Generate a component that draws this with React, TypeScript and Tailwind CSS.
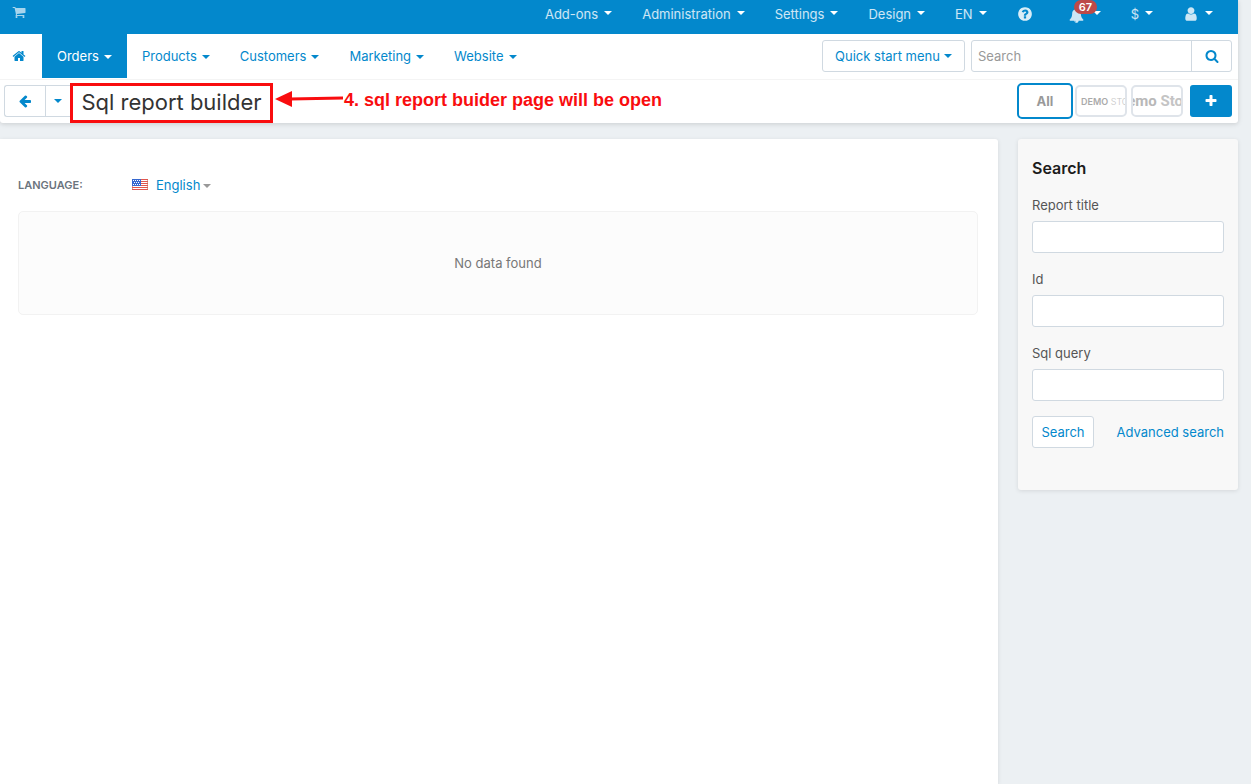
import type { ReactNode } from 'react';

const icons = {
  home: 'M1472 992v480q0 26-19 45t-45 19h-384v-384h-256v384h-384q-26 0-45-19t-19-45v-480q0-1 .5-3t.5-3l575-474 575 474q1 2 1 6zm223-69l-62 74q-8 9-21 11h-3q-13 0-21-7l-692-577-692 577q-12 8-24 7-13-2-21-11l-62-74q-8-10-7-23.5t11-21.5l719-599q32-26 76-26t76 26l244 204v-195q0-14 9-23t23-9h192q14 0 23 9t9 23v408l219 182q10 8 11 21.5t-7 23.5z',
  search: 'M1216 832q0-185-131.5-316.5t-316.5-131.5-316.5 131.5-131.5 316.5 131.5 316.5 316.5 131.5 316.5-131.5 131.5-316.5zm512 832q0 52-38 90t-90 38q-54 0-90-38l-343-342q-179 124-399 124-143 0-273.5-55.5t-225-150-150-225-55.5-273.5 55.5-273.5 150-225 225-150 273.5-55.5 273.5 55.5 225 150 150 225 55.5 273.5q0 220-124 399l343 343q37 37 37 90z',
  cart: 'M704 1536q0 52-38 90t-90 38-90-38-38-90 38-90 90-38 90 38 38 90zm896 0q0 52-38 90t-90 38-90-38-38-90 38-90 90-38 90 38 38 90zm128-1088v512q0 24-16.5 42.5t-40.5 21.5l-1044 122q13 60 13 70 0 16-24 64h920q26 0 45 19t19 45-19 45-45 19h-1024q-26 0-45-19t-19-45q0-11 8-31.5t16-36 21.5-40 15.5-29.5l-177-823h-204q-26 0-45-19t-19-45 19-45 45-19h256q16 0 28.5 6.5t19.5 15.5 13 24.5 8 26 5.5 29.5 4.5 26h1201q26 0 45 19t19 45z',
  help: 'M1024 1376v-192q0-14-9-23t-23-9h-192q-14 0-23 9t-9 23v192q0 14 9 23t23 9h192q14 0 23-9t9-23zm256-672q0-88-55.5-163t-138.5-116-170-41q-243 0-371 213-15 24 8 42l132 100q7 6 19 6 16 0 25-12 53-68 86-92 34-24 86-24 48 0 85.5 26t37.5 59q0 38-20 61t-68 45q-63 28-115.5 86.5t-52.5 125.5v36q0 14 9 23t23 9h192q14 0 23-9t9-23q0-19 21.5-49.5t54.5-49.5q32-18 49-28.5t46-35 44.5-48 28-60.5 12.5-81zm384 192q0 209-103 385.5t-279.5 279.5-385.5 103-385.5-103-279.5-279.5-103-385.5 103-385.5 279.5-279.5 385.5-103 385.5 103 279.5 279.5 103 385.5z',
  user: 'M1536 1399q0 109-62.5 187t-150.5 78h-854q-88 0-150.5-78t-62.5-187q0-85 8.5-160.5t31.5-152 58.5-131 94-89 134.5-34.5q131 128 313 128t313-128q76 0 134.5 34.5t94 89 58.5 131 31.5 152 8.5 160.5zm-256-887q0 159-112.5 271.5t-271.5 112.5-271.5-112.5-112.5-271.5 112.5-271.5 271.5-112.5 271.5 112.5 112.5 271.5z',
  plus: 'M1600 736v192q0 40-28 68t-68 28h-416v416q0 40-28 68t-68 28h-192q-40 0-68-28t-28-68v-416h-416q-40 0-68-28t-28-68v-192q0-40 28-68t68-28h416v-416q0-40 28-68t68-28h192q40 0 68 28t28 68v416h416q40 0 68 28t28 68z',
  back: 'M1664 896v128q0 53-32.5 90.5t-84.5 37.5h-704l293 294q38 36 38 90t-38 90l-75 76q-37 37-90 37-52 0-91-37l-651-652q-37-37-37-90 0-52 37-91l651-650q38-38 91-38 52 0 90 38l75 74q38 38 38 91t-38 91l-293 293h704q52 0 84.5 37.5t32.5 90.5z',
  bell: 'M912 1696q0-16-16-16-59 0-101.5-42.5t-42.5-101.5q0-16-16-16t-16 16q0 73 51.5 124.5t124.5 51.5q16 0 16-16zm816-288q0 52-38 90t-90 38h-448q0 106-75 181t-181 75-181-75-75-181h-448q-52 0-90-38t-38-90q50-42 91-88t85-119.5 74.5-158.5 50-206 19.5-260q0-152 117-282.5t307-158.5q-8-19-8-39 0-40 28-68t68-28 68 28 28 68q0 20-8 39 190 28 307 158.5t117 282.5q0 139 19.5 260t50 206 74.5 158.5 85 119.5 91 88z',
};

function Icon({ name, className = 'size-4' }: { name: keyof typeof icons; className?: string }) {
  return (
    <svg viewBox="0 0 1792 1792" fill="currentColor" aria-hidden="true" className={`shrink-0 ${className}`}>
      <path d={icons[name]} />
    </svg>
  );
}

function Caret({ className = '' }: { className?: string }) {
  return <span className={`inline-block shrink-0 border-x-4 border-t-4 border-x-transparent ${className}`} />;
}

function TopItem({ label, children }: { label?: string; children: ReactNode }) {
  return (
    <button type="button" aria-label={label} className="flex items-center gap-1.5 px-[15px] h-[30px] text-white/80">
      {children}
      <Caret className="border-t-white mb-1" />
    </button>
  );
}

function TopBar() {
  return (
    <div className="flex justify-between h-[34px] bg-[#0388cc] pl-3 pr-2.5">
      <a href="#" aria-label="Storefront" className="text-white/65 pt-[5px]">
        <Icon name="cart" className="size-3.5" />
      </a>
      <div className="flex items-start">
        <TopItem>Add-ons</TopItem>
        <TopItem>Administration</TopItem>
        <TopItem>Settings</TopItem>
        <TopItem>Design</TopItem>
        <TopItem>EN</TopItem>
        <button type="button" aria-label="Help" className="flex items-center h-7 px-[15px] text-white/85">
          <Icon name="help" />
        </button>
        <div className="relative ml-1.5">
          <TopItem label="Notifications">
            <Icon name="bell" className="size-[15px] mr-[3px]" />
          </TopItem>
          <span className="absolute left-5 top-0 h-3.5 px-[5px] rounded-full bg-[#bd4a49] text-white text-[11px] leading-[14px] font-semibold">67</span>
        </div>
        <TopItem>$</TopItem>
        <TopItem label="Account">
          <Icon name="user" className="size-4 mb-0.5" />
        </TopItem>
      </div>
    </div>
  );
}

const sections = ['Orders', 'Products', 'Customers', 'Marketing', 'Website'];

function NavBar() {
  return (
    <nav className="flex items-start justify-between h-[46px] border-b border-[#f4f4f4] pr-1.5">
      <div className="flex h-11">
        <a href="#" aria-label="Home" className="flex items-center w-[42px] pl-3">
          <Icon name="home" className="size-3.5" />
        </a>
        {sections.map((name) => (
          <button
            key={name}
            type="button"
            className={`flex items-center gap-[5px] px-[15px] pt-0.5 ${name === 'Orders' ? 'bg-[#0388cc] text-white' : ''}`}
          >
            {name}
            <Caret className="border-t-current" />
          </button>
        ))}
      </div>
      <div className="flex gap-1.5 pt-1.5">
        <button type="button" className="flex items-center justify-center gap-1 h-8 w-[143px] rounded-[3px] border border-[#d0d9e1] pt-0.5">
          Quick start menu
          <Caret className="border-t-current mb-0.5" />
        </button>
        <form className="flex h-8 w-[261px] rounded-[3px] border border-[#d0d9e1]">
          <input
            type="text"
            aria-label="Search"
            placeholder="Search"
            className="min-w-0 flex-1 px-1.5 pt-0.5 outline-none placeholder:text-[#999]"
          />
          <button type="submit" aria-label="Find" className="flex items-center justify-center w-10 border-l border-[#d0d9e1]">
            <Icon name="search" className="size-3.5" />
          </button>
        </form>
      </div>
    </nav>
  );
}

function ActionBar() {
  return (
    <div className="flex items-start justify-between h-[43px] pt-[3px] pl-1 pr-1.5">
      <div className="flex items-center">
        <div className="mt-0.5 flex h-8 w-[66px] self-start rounded-l-[3px] border border-r-0 border-[#d0d9e1]">
          <button type="button" aria-label="Back" className="flex items-center justify-center w-10">
            <Icon name="back" className="size-3.5" />
          </button>
          <button type="button" aria-label="Recent pages" className="flex flex-1 items-center justify-center border-l border-[#d0d9e1]">
            <Caret className="border-t-current" />
          </button>
        </div>
        <h1 className="h-10 w-[203px] border-3 border-[#f90d0f] text-center whitespace-nowrap text-[22px] leading-[33px] text-[#333]">
          Sql report builder
        </h1>
        <svg viewBox="0 0 68 18" className="ml-0.5 mb-2 h-[18px] w-[68px] text-[#f90d0f]" aria-hidden="true">
          <path d="M0 9L17 1V17Z" fill="currentColor" />
          <path d="M15 9L68 8" stroke="currentColor" strokeWidth="3" />
        </svg>
        <p className="pb-1.5 pl-px font-['Liberation_Sans',Arial,sans-serif] text-[18px] font-bold whitespace-nowrap text-[#f90d0f]">
          4. sql report buider page will be open
        </p>
      </div>
      <div className="flex items-center">
        <button type="button" className="h-9 w-14 rounded-[5px] border-2 border-[#0388cc] pt-0.5 font-bold text-[#999]">
          All
        </button>
        <button type="button" className="ml-0.5 h-8 w-[52px] overflow-hidden rounded-[5px] border-2 border-[#dfe4ea] pt-0.5 pl-1 text-left text-[9px] whitespace-nowrap text-[#c4c4c4]">
          <span className="font-semibold text-[#aaa]">DEMO</span> <span className="font-light">STORE</span>
        </button>
        <button
          type="button"
          className="ml-1 flex h-8 w-[52px] items-center justify-center overflow-hidden rounded-[5px] border-2 border-[#dfe4ea] font-['Roboto',sans-serif] text-[15px] font-bold whitespace-nowrap text-[#c4c4c4]"
        >
          <span className="text-[#b8b8b8]">Demo&nbsp;</span>Store
        </button>
        <button type="button" aria-label="Add report" className="ml-[7px] flex h-8 w-[42px] items-center justify-center rounded-[3px] bg-[#0388cc] text-white">
          <Icon name="plus" className="size-3.5" />
        </button>
      </div>
    </div>
  );
}

function UsFlag() {
  return (
    <svg viewBox="0 0 16 11" className="mb-0.5 h-[11px] w-4" aria-hidden="true">
      <rect width="16" height="11" fill="#fff" />
      <path d="M0 .5H16M0 2.5H16M0 4.5H16M0 6.5H16M0 8.5H16M0 10.5H16" stroke="#e0564f" />
      <path d="M.5 0V11M15.5 0V11" stroke="#d0604c" strokeOpacity=".6" />
      <rect width="9" height="7" fill="#3768cf" />
      <path d="M1 1.5H8M2 3.5H8M1 5.5H8" stroke="#fff" strokeDasharray="1 1" />
    </svg>
  );
}

function Field({ id, label }: { id: string; label: string }) {
  return (
    <div className="mb-4">
      <label htmlFor={id} className="block h-5 mb-1.5 leading-5 text-[#555]">
        {label}
      </label>
      <input id={id} type="text" className="block h-8 w-full rounded-[3px] border border-[#d0d9e1] bg-white px-2" />
    </div>
  );
}

function SearchPanel() {
  return (
    <aside className="w-[220px] shrink-0 self-start rounded-[3px] bg-[#f8f8f8] px-3.5 pt-[17px] pb-[42px] shadow-[0_1px_4px_rgba(0,0,0,0.1)]">
      <h2 className="mb-[15px] text-[16px] leading-6 font-semibold text-[#1c1c1c]">Search</h2>
      <form>
        <Field id="report-title" label="Report title" />
        <Field id="report-id" label="Id" />
        <Field id="sql-query" label="Sql query" />
        <div className="-mt-px flex items-center justify-between">
          <button type="submit" className="h-8 w-[62px] rounded-[3px] border border-[#d0d9e1] bg-white pt-0.5">
            Search
          </button>
          <a href="#" className="pt-0.5">Advanced search</a>
        </div>
      </form>
    </aside>
  );
}

export default function App() {
  return (
    <div className="flex min-h-screen flex-col bg-[#ecf0f3] pr-[13px] font-['Inter',sans-serif] text-[13px] text-[#0388cc]">
      <header className="rounded-b-[3px] bg-white shadow-[0_1px_5px_rgba(0,0,0,0.15)]">
        <TopBar />
        <NavBar />
        <ActionBar />
      </header>
      <div className="mt-4 flex flex-1 gap-5">
        <main className="min-w-0 flex-1 rounded-tr-[3px] bg-white pt-9 pr-5 pl-[18px] shadow-[0_1px_4px_rgba(0,0,0,0.1)]">
          <div className="flex h-[21px] items-center">
            <span className="w-[114px] text-[11px] font-semibold text-[#6b747d]">LANGUAGE:</span>
            <button type="button" className="flex items-center">
              <UsFlag />
              <span className="ml-2 mr-[3px]">English</span>
              <Caret className="border-t-[#999]" />
            </button>
          </div>
          <p className="mt-[15px] rounded-[5px] border border-[#f2f2f2] bg-[#fcfcfc] py-[41px] text-center leading-5 text-[#777]">
            No data found
          </p>
        </main>
        <SearchPanel />
      </div>
    </div>
  );
}
